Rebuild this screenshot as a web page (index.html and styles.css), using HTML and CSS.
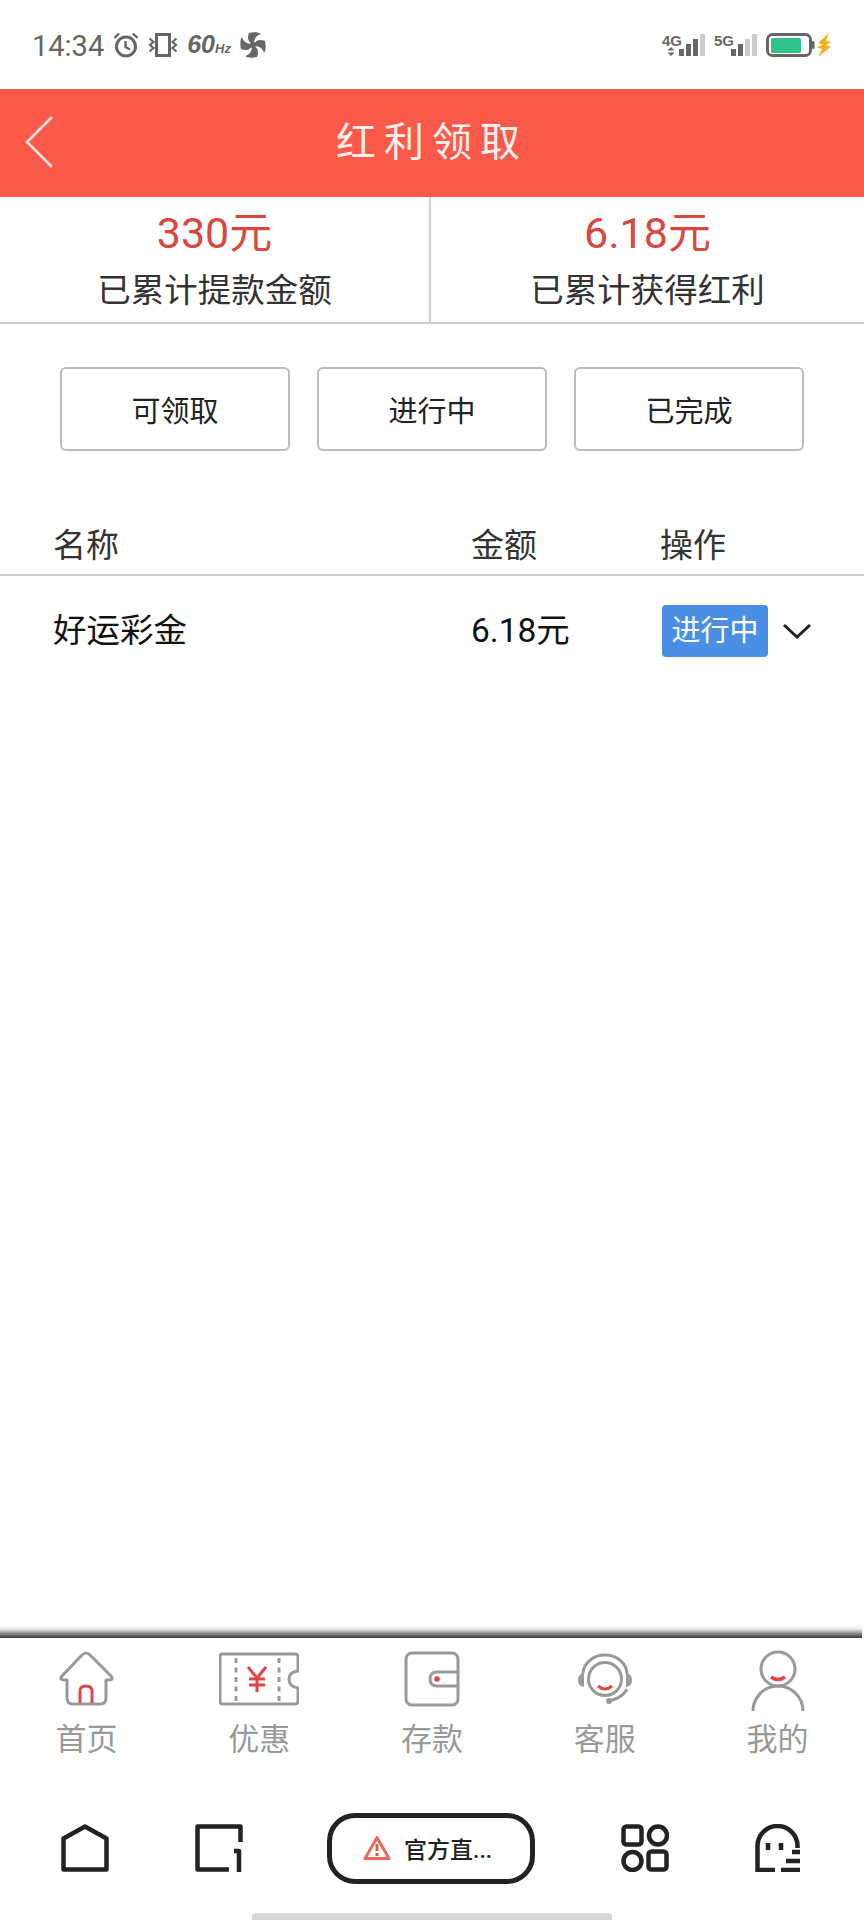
FILE: index.html
```html
<!DOCTYPE html>
<html lang="zh">
<head>
    <meta charset="UTF-8">
    <meta name="viewport" content="width=device-width, initial-scale=1.0">
    <title>红利领取</title>
    <link rel="stylesheet" href="styles.css">
</head>
<body>
    <div class="phone">
        <div class="status-bar">
            <div class="status-left">
                <span class="time">14:34</span>
                <svg class="ico-alarm" viewBox="0 0 26 26" width="26" height="26" fill="none" stroke="#666" stroke-width="3"><circle cx="13" cy="14.500" r="9.500"/><path d="M12.500 9V15L17 17.500" stroke-width="2.400"/><path d="M1.500 6L6 1.500M24.500 6L20 1.500" stroke-width="2.400"/></svg>
                <svg class="ico-vibrate" viewBox="0 0 30 24" width="30" height="24" fill="none" stroke="#666" stroke-width="3"><rect x="8.500" y="1.500" width="13" height="21"/><path d="M1.500 5.500L5.500 9L2 12L5.500 15L1.500 18.500M28.500 5.500L24.500 9L28 12L24.500 15L28.500 18.500" stroke-width="2.200"/></svg>
                <span class="hz"><b>60</b><i>Hz</i></span>
                <svg class="ico-fan" viewBox="0 0 26 26" width="26" height="26" fill="#666"><circle cx="13" cy="13" r="3"/><path d="M13 12C8 11 7 6 9 1C13 0 19 0 21 2C17 3 14 6 14 12ZM14 13C15 8 20 7 25 9C26 13 26 19 24 21C23 17 20 14 14 14ZM13 14C18 15 19 20 17 25C13 26 7 26 5 24C9 23 12 20 12 14ZM12 13C11 18 6 19 1 17C0 13 0 7 2 5C3 9 6 12 12 12Z"/></svg>
            </div>
            <div class="status-right">
                <div class="signal">
                    <span class="net">4G<svg viewBox="0 0 8 9" width="8" height="9" fill="#666"><path d="M4 0L7.500 3.500H.5ZM4 9L.5 5.500H7.500Z"/></svg></span>
                    <svg viewBox="0 0 26 22" width="26" height="22"><rect x="0" y="15" width="5" height="7" fill="#666"/><rect x="7" y="10" width="5" height="12" fill="#666"/><rect x="14" y="5" width="5" height="17" fill="#666"/><rect x="21" y="0" width="5" height="22" fill="#ccc"/></svg>
                </div>
                <div class="signal">
                    <span class="net">5G</span>
                    <svg viewBox="0 0 26 22" width="26" height="22"><rect x="0" y="15" width="5" height="7" fill="#666"/><rect x="7" y="10" width="5" height="12" fill="#666"/><rect x="14" y="5" width="5" height="17" fill="#ccc"/><rect x="21" y="0" width="5" height="22" fill="#ccc"/></svg>
                </div>
                <svg class="ico-battery" viewBox="0 0 66 24" width="66" height="24" fill="none"><rect x="1.500" y="1.500" width="43" height="21" rx="5" stroke="#666" stroke-width="3"/><rect x="5" y="5" width="30" height="15" rx="1.500" fill="#2fc28a"/><rect x="46" y="8" width="2.500" height="8" rx="1" fill="#666"/><path d="M63 0L52 10L57 11.500L51 14.500L56 16L52 24L65 13.500L60 12L65 9L60 7.500Z" fill="#f5b216"/></svg>
            </div>
        </div>

        <header class="title-bar">
            <svg class="back" viewBox="0 0 30 54" width="30" height="54" fill="none" stroke="#fde3dc" stroke-width="2.600"><path d="M27 2L2 27L27 52"/></svg>
            <h1>红利领取</h1>
        </header>

        <section class="stats">
            <div class="stat">
                <div class="stat-value">330元</div>
                <div class="stat-label">已累计提款金额</div>
            </div>
            <div class="stat">
                <div class="stat-value">6.18元</div>
                <div class="stat-label">已累计获得红利</div>
            </div>
        </section>

        <div class="filters">
            <button class="filter-btn">可领取</button>
            <button class="filter-btn">进行中</button>
            <button class="filter-btn">已完成</button>
        </div>

        <div class="table-head">
            <span>名称</span>
            <span>金额</span>
            <span>操作</span>
        </div>
        <div class="table-row">
            <span class="row-name">好运彩金</span>
            <span class="row-amount">6.18元</span>
            <span class="row-action">
                <span class="badge">进行中</span>
                <svg viewBox="0 0 30 16" width="30" height="16" fill="none" stroke="#222" stroke-width="3"><path d="M2 2L15 14L28 2"/></svg>
            </span>
        </div>

        <div class="spacer"></div>

        <div class="tabs-shadow"></div>
        <nav class="tabs">
            <div class="tab">
                <svg viewBox="0 0 80 62" width="80" height="62" fill="none" stroke="#999" stroke-width="3" stroke-linejoin="round">
                    <path d="M36 5Q40 1 44 5L65 26Q68 30 63 30H60V48Q60 54 54 54H27Q21 54 21 48V30H18Q13 30 16 26Z"/>
                    <path d="M34 53V41Q34 36 40 36Q46 36 46 41V53" stroke="#e0454a"/>
                </svg>
                <span>首页</span>
            </div>
            <div class="tab">
                <svg viewBox="0 0 80 62" width="80" height="62" fill="none" stroke="#999" stroke-width="3" stroke-linejoin="round">
                    <path d="M3 4H76Q79 4 79 7V21Q70 22 70 29Q70 37 79 38V51Q79 54 76 54H3Q1 54 1 51V7Q1 4 3 4Z"/>
                    <path d="M17 8V52M60 8V52" stroke-dasharray="5 4.500"/>
                    <path d="M29 17L38 28L47 17M30 29H46M30 35H46M38 28V42" stroke="#e0454a"/>
                </svg>
                <span>优惠</span>
            </div>
            <div class="tab">
                <svg viewBox="0 0 80 62" width="80" height="62" fill="none" stroke="#999" stroke-width="3">
                    <rect x="14" y="3" width="52" height="52" rx="6"/>
                    <path d="M65 22H45Q38 22 38 29Q38 36 45 36H65"/>
                    <circle cx="45" cy="29" r="2.800" fill="#e0454a" stroke="none"/>
                </svg>
                <span>存款</span>
            </div>
            <div class="tab">
                <svg viewBox="0 0 80 62" width="80" height="62" fill="none" stroke="#999" stroke-width="3">
                    <circle cx="40" cy="29" r="16.500"/>
                    <path d="M18 24A22 19 0 0 1 62 24"/>
                    <path d="M19 23Q13 24 13 30Q13 36 19 37ZM61 23Q67 24 67 30Q67 36 61 37Z" fill="#999" stroke="none"/>
                    <path d="M62 39Q58 47 46 50.500"/>
                    <circle cx="44" cy="51" r="3" fill="#999" stroke="none"/>
                    <path d="M33 36Q40 42 47 36" stroke="#e0454a"/>
                </svg>
                <span>客服</span>
            </div>
            <div class="tab">
                <svg viewBox="0 0 80 62" width="80" height="62" fill="none" stroke="#999" stroke-width="3">
                    <circle cx="40" cy="19" r="17"/>
                    <path d="M15 61A25 25 0 0 1 65 61"/>
                    <path d="M33 27Q40 32 47 27" stroke="#e0454a" stroke-width="3.400"/>
                </svg>
                <span>我的</span>
            </div>
        </nav>

        <div class="toolbar">
            <svg viewBox="0 0 48 48" width="48" height="48" fill="none" stroke="#222" stroke-width="4.500" stroke-linejoin="round"><path d="M2.500 14.500L24 2.500L45.500 14.500V45.500H2.500Z"/></svg>
            <svg viewBox="0 0 48 48" width="48" height="48" fill="none" stroke="#222" stroke-width="4.500" stroke-linejoin="round"><path d="M34 45.500H2.500V2.500H45.500V18"/><path d="M39 27H44V48"/></svg>
            <div class="url-pill">
                <svg viewBox="0 0 28 26" width="28" height="26" fill="none" stroke="#e8685e" stroke-width="3" stroke-linejoin="round"><path d="M14 2.500L26 23.500H2Z"/><path d="M14 9V16M14 18V21" stroke="#e2574c"/></svg>
                <span>官方直...</span>
            </div>
            <svg viewBox="0 0 48 48" width="48" height="48" fill="none" stroke="#222" stroke-width="4.500"><rect x="2.500" y="2.500" width="18" height="18" rx="3"/><circle cx="37" cy="11.500" r="9"/><circle cx="11.500" cy="37" r="9"/><rect x="27.500" y="27.500" width="18" height="18" rx="3"/></svg>
            <svg viewBox="0 0 45 48" width="45" height="48" fill="none" stroke="#222" stroke-width="4.500"><path d="M20 46H2.500V22A20 20 0 0 1 42.500 22V24"/><path d="M13 19V26M26 19V26"/><path d="M37 28H45M31 37H45M26 46H45"/></svg>
        </div>
        <div class="gesture-bar"></div>
    </div>
</body>
</html>
```

FILE: styles.css
```css
* {
    box-sizing: border-box;
}
body {
    margin: 0;
    background: #fff;
    font-family: Roboto, "Noto Sans CJK SC", sans-serif;
    color: #222;
}
.phone {
    display: flex;
    flex-direction: column;
    width: 864px;
    height: 1920px;
    overflow: hidden;
}
.status-bar {
    display: flex;
    justify-content: space-between;
    align-items: center;
    height: 89px;
    padding: 0 32px 0 32px;
    color: #666;
}
.status-left {
    display: flex;
    align-items: center;
    gap: 9px;
}
.time {
    font-size: 29px;
    line-height: 34px;
    padding-top: 2px;
}
.hz {
    font-family: "Liberation Sans", sans-serif;
    font-style: italic;
    font-weight: bold;
}
.hz b {
    font-size: 25px;
}
.hz i {
    font-size: 13px;
}
.status-right {
    display: flex;
    align-items: center;
    gap: 9px;
}
.signal {
    display: flex;
    align-items: flex-end;
}
.signal svg:last-child {
    margin-left: -3px;
}
.net {
    display: flex;
    flex-direction: column;
    align-items: center;
    align-self: flex-start;
    width: 20px;
    font-family: "Liberation Sans", sans-serif;
    font-size: 15px;
    font-weight: bold;
    line-height: 13px;
}

.title-bar {
    position: relative;
    display: flex;
    justify-content: center;
    align-items: center;
    height: 108px;
    padding-bottom: 8px;
    background: #fb5949;
}
.title-bar h1 {
    margin: 0;
    font-size: 40px;
    font-weight: 400;
    letter-spacing: 8px;
    color: #fdf1ed;
}
.back {
    position: absolute;
    left: 25px;
    top: 26px;
}

.stats {
    display: flex;
    border-bottom: 2px solid #ccc;
}
.stat {
    flex: 1;
    padding: 8px 0 2px;
    text-align: center;
}
.stat:first-child {
    flex: 0 0 431px;
    border-right: 2px solid #ccc;
}
.stat-value {
    font-size: 43px;
    line-height: 57px;
    color: #d9483f;
}
.stat-label {
    font-size: 33.5px;
    line-height: 58px;
    color: #333;
}

.filters {
    display: flex;
    gap: 27px;
    padding: 43px 0 0 60px;
}
.filter-btn {
    width: 230px;
    height: 84px;
    background: #fff;
    border: 2px solid #bbb;
    border-radius: 6px;
    font-family: inherit;
    font-size: 29px;
    color: #222;
}

.table-head,
.table-row {
    display: grid;
    grid-template-columns: 418px 189px 1fr;
    padding-left: 53px;
}
.table-head {
    margin-top: 71px;
    height: 54px;
    border-bottom: 2px solid #ccc;
    font-size: 33px;
    line-height: 48px;
    color: #333;
}
.table-row {
    align-items: center;
    margin-top: 27px;
    font-size: 33.5px;
    color: #111;
}
.row-name,
.row-amount {
    padding-bottom: 7px;
}
.row-action {
    display: flex;
    align-items: center;
    gap: 14px;
    padding-left: 2px;
}
.badge {
    width: 106px;
    height: 52px;
    background: #4a8fe3;
    border-radius: 4px;
    font-size: 29px;
    line-height: 52px;
    text-align: center;
    color: #fff;
}
.spacer {
    flex: 1;
}

.tabs-shadow {
    height: 13px;
    margin-right: 2px;
    background: linear-gradient(to bottom, rgba(40, 40, 40, 0), #eee 30%, #999 60%, #333);
}
.tabs {
    display: flex;
    height: 152px;
    padding-top: 12px;
}
.tab {
    flex: 1;
    display: flex;
    flex-direction: column;
    align-items: center;
    font-size: 31px;
    color: #999;
}
.tab span {
    margin-top: 8px;
    line-height: 40px;
}

.toolbar {
    display: flex;
    justify-content: space-between;
    align-items: center;
    height: 116px;
    padding: 0 64px 0 61px;
}
.url-pill {
    display: flex;
    align-items: center;
    gap: 13px;
    width: 208px;
    height: 71px;
    margin-left: -2px;
    padding-left: 31px;
    border: 5px solid #222;
    border-radius: 28px;
    font-size: 23px;
    font-weight: 500;
}
.gesture-bar {
    width: 360px;
    height: 7px;
    margin: 7px auto 0;
    background: #d6d6d6;
    border-radius: 4px 4px 0 0;
}
```
